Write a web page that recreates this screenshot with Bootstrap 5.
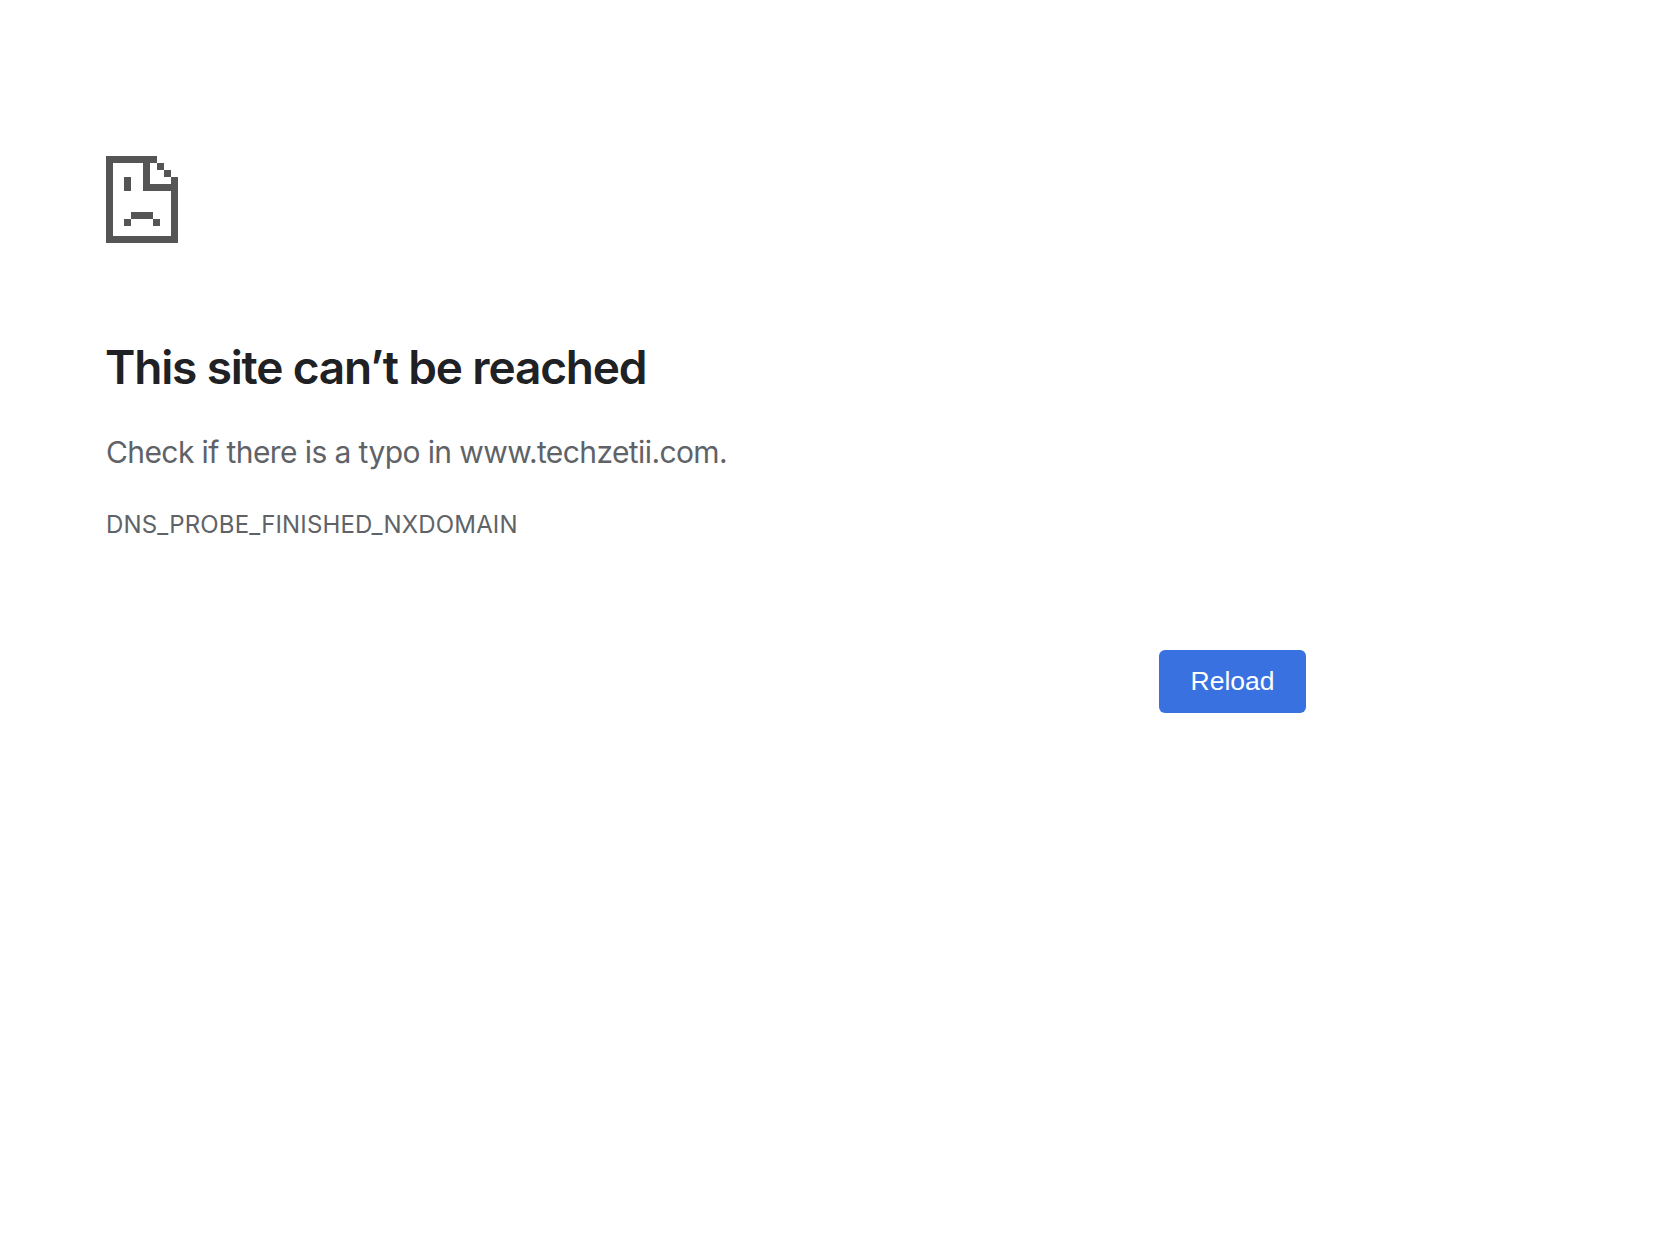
<!DOCTYPE html>
<html lang="en">
<head>
<meta charset="utf-8">
<title>www.techzetii.com</title>
<link rel="stylesheet" href="https://cdn.jsdelivr.net/npm/bootstrap@5.3.0/dist/css/bootstrap.min.css">
<style>
body { background: #fff; font-family: Inter, "Liberation Sans", sans-serif; }
.err-wrap { padding: 156px 0 0 106px; width: 1306px; }
.err-icon { display: block; width: 72px; height: 87px; fill: #555; }
.err-title { margin: 96px 0 0 -1px; font-family: Inter, sans-serif; font-size: 46px; line-height: 56px; font-weight: 600; color: #202124; letter-spacing: -1.16px; }
.err-text { margin: 37px 0 0; font-size: 30px; line-height: 40px; color: #5f6368; letter-spacing: -0.6px; }
.err-code { margin: 37px 0 0; font-size: 24px; line-height: 32px; color: #5f6368; letter-spacing: 0.16px; }
.err-actions { margin-top: 109px; }
.err-btn { width: 147px; height: 63px; padding: 0; background: #3971e0; border: 0; border-radius: 6px; color: #fff; font-family: "Liberation Sans", sans-serif; font-size: 26.5px; line-height: 63px; }
</style>
</head>
<body>
<main class="err-wrap">
  <svg class="err-icon" viewBox="0 0 72 87" role="img" aria-label="Sad page icon">
    <rect x="0" y="0" width="51" height="7"/>
    <rect x="0" y="0" width="7" height="87"/>
    <rect x="0" y="80" width="72" height="7"/>
    <rect x="65" y="21" width="7" height="66"/>
    <rect x="37" y="0" width="7" height="35"/>
    <rect x="37" y="28" width="35" height="7"/>
    <rect x="51" y="7" width="7" height="7"/>
    <rect x="58" y="14" width="7" height="7"/>
    <rect x="18" y="21" width="7" height="14"/>
    <rect x="25" y="56" width="22" height="7"/>
    <rect x="18" y="63" width="7" height="7"/>
    <rect x="47" y="63" width="7" height="7"/>
  </svg>
  <h1 class="err-title">This site can’t be reached</h1>
  <p class="err-text">Check if there is a typo in www.techzetii.com.</p>
  <p class="err-code">DNS_PROBE_FINISHED_NXDOMAIN</p>
  <div class="err-actions d-flex justify-content-end">
    <button type="button" class="btn err-btn">Reload</button>
  </div>
</main>
</body>
</html>
